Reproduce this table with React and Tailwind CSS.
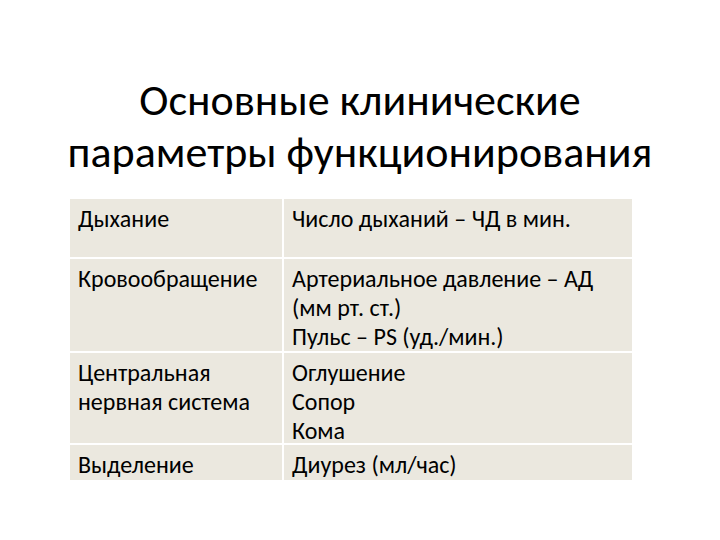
export default function App() {
  const rows = [
    { h: "h-[58px]", a: ["Дыхание"], b: ["Число дыханий – ЧД в мин."] },
    { h: "h-[92px]", a: ["Кровообращение"], b: ["Артериальное давление – АД", "(мм рт. ст.)", "Пульс – PS (уд./мин.)"] },
    { h: "h-[90px]", a: ["Центральная", "нервная система"], b: ["Оглушение", "Сопор", "Кома"] },
    { h: "h-[35px]", a: ["Выделение"], b: ["Диурез (мл/час)"] },
  ];
  return (
    <div className="w-[720px] h-[540px] bg-white flex flex-col" style={{ fontFamily: "Carlito, 'Open Sans', sans-serif" }}>
      <div className="mt-[74px] h-[125px] text-[44px] leading-[52px] text-black text-center">
        <div>Основные клинические</div>
        <div>параметры функционирования</div>
      </div>
      <div className="w-[562px] ml-[70px] flex flex-col gap-[2px] bg-white">
        {rows.map((r, i) => (
          <div key={i} className={`flex gap-[2px] ${r.h}`}>
            <div className="w-[212px] bg-[#ebe8df] pl-[8px] pt-[5px] text-[24px] leading-[29px] text-black">
              {r.a.map((t, j) => <div key={j}>{t}</div>)}
            </div>
            <div className="flex-1 bg-[#ebe8df] pl-[8px] pt-[5px] text-[24px] leading-[29px] text-black">
              {r.b.map((t, j) => <div key={j}>{t}</div>)}
            </div>
          </div>
        ))}
      </div>
    </div>
  );
}
